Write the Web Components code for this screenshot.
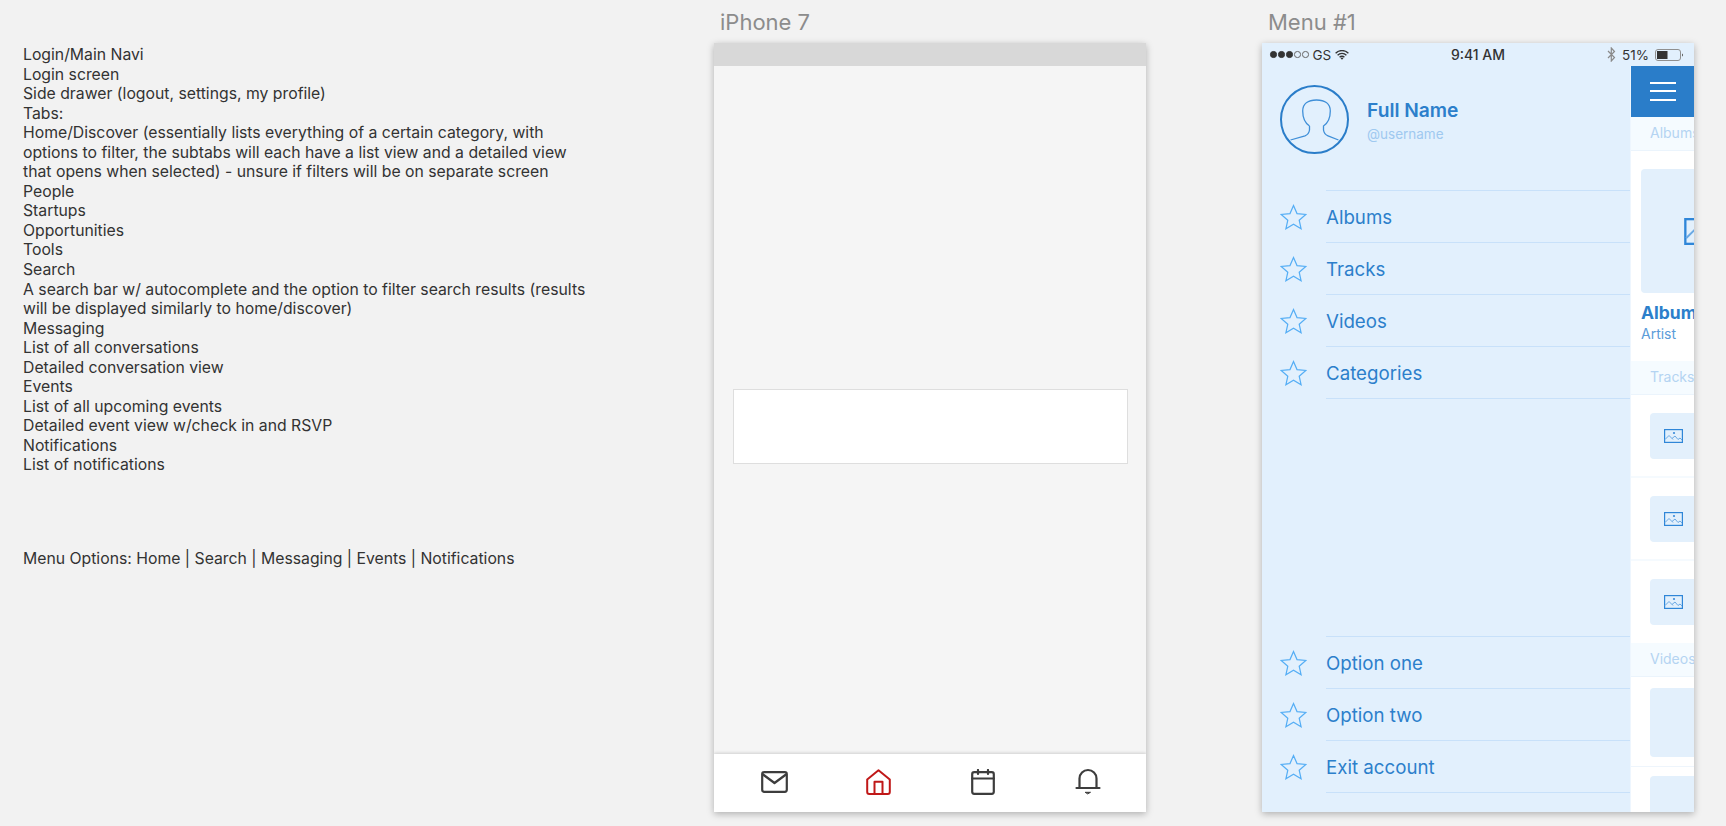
<!DOCTYPE html>
<html lang="en"><head><meta charset="utf-8"><title>Board</title>
<style>
html,body{margin:0;padding:0;height:826px;overflow:hidden;background:#f2f2f2;font-family:Inter,"Liberation Sans",sans-serif}
</style></head><body>
<app-page>
  <notes-panel></notes-panel>
  <art-board label="iPhone 7"><phone-screen></phone-screen></art-board>
  <art-board label="Menu #1"><menu-screen></menu-screen></art-board>
</app-page>
<script>
const def=(name,css,html)=>{customElements.define(name,class extends HTMLElement{
  connectedCallback(){ if(this.shadowRoot) return; const r=this.attachShadow({mode:'open'});
    r.innerHTML='<style>'+css+'</style>'+(typeof html==='function'?html(this):html); }
});};
const star='<svg width="27" height="26" viewBox="0 0 27 26"><path d="M13.5 1.5 17 9.6 25.8 10.4 19.2 16.2 21.1 24.8 13.5 20.3 5.9 24.8 7.8 16.2 1.2 10.4 10 9.6Z" fill="none" stroke="#55aef5" stroke-width="1.2" stroke-linejoin="miter"/></svg>';
const pic=(w,h)=>`<svg width="${w}" height="${h}" viewBox="0 0 19 14"><rect x=".6" y=".6" width="17.8" height="12.8" fill="none" stroke="#2f86d8" stroke-width="1.2"/><path d="M1 10.5 5 6.5 9 10.5M8 9.5 11 7 14 10.5 16 9 18 11" fill="none" stroke="#6aa9e4" stroke-width="1"/><circle cx="10" cy="4" r="1.1" fill="#3a8bd9"/></svg>`;

def('app-page',`:host{display:grid;grid-template-columns:714px 432px 432px;column-gap:0;height:826px;align-items:start}
::slotted(art-board:last-child){margin-left:116px}`,'<slot></slot>');

def('notes-panel',`:host{display:block;padding:45px 0 0 23px;font:15.77px/19.55px Inter,"Liberation Sans",sans-serif;color:#333;box-sizing:border-box}
.l{white-space:nowrap}.gap{margin-top:74px}`,
`<div class="l">Login/Main Navi</div><div class="l">Login screen</div><div class="l">Side drawer (logout, settings, my profile)</div><div class="l">Tabs:</div>
<div class="l">Home/Discover (essentially lists everything of a certain category, with</div><div class="l">options to filter, the subtabs will each have a list view and a detailed view</div><div class="l">that opens when selected) - unsure if filters will be on separate screen</div>
<div class="l">People</div><div class="l">Startups</div><div class="l">Opportunities</div><div class="l">Tools</div><div class="l">Search</div>
<div class="l">A search bar w/ autocomplete and the option to filter search results (results</div><div class="l">will be displayed similarly to home/discover)</div>
<div class="l">Messaging</div><div class="l">List of all conversations</div><div class="l">Detailed conversation view</div><div class="l">Events</div><div class="l">List of all upcoming events</div><div class="l">Detailed event view w/check in and RSVP</div><div class="l">Notifications</div><div class="l">List of notifications</div>
<div class="l gap">Menu Options: Home | Search | Messaging | Events | Notifications</div>`);

def('art-board',`:host{display:flex;flex-direction:column;width:432px}
.t{height:43px;box-sizing:border-box;padding:9px 0 0 6px;font:22px/26px Inter,"Liberation Sans",sans-serif;color:#8c8c8c;white-space:nowrap}
.f{height:769px;box-shadow:0 2px 7px rgba(0,0,0,.28);overflow:hidden;display:flex}`,
 el=>`<div class="t">${el.getAttribute('label')}</div><div class="f"><slot></slot></div>`);

def('phone-screen',`:host{display:flex;flex-direction:column;flex:1;background:#f5f5f5}
.s{height:23px;background:#d8d8d8}
.c{flex:1;padding:323px 18px 0 18.5px}
.b{height:73px;background:#fff;border:1px solid #dedede}`,
`<div class="s"></div><div class="c"><div class="b"></div></div><tab-bar></tab-bar>`);

def('tab-bar',`:host{display:grid;grid-template-columns:repeat(4,1fr);height:58px;padding:0 6px 0 8px;background:#fff;box-shadow:0 -1px 3px rgba(0,0,0,.16);align-items:center;justify-items:center;position:relative}
svg{display:block;fill:none;stroke:#3d3d3d;stroke-width:2.2;stroke-linejoin:round;stroke-linecap:round;margin-top:-3px}`,
`<svg width="27" height="22" viewBox="0 0 27 22"><rect x="1.2" y="1.2" width="24.6" height="19.6" rx="2"/><path d="M2 3.5 13.5 12 25 3.5"/></svg>
<svg width="25" height="26" viewBox="0 0 25 26" style="stroke:#c01818;stroke-width:2"><path d="M1.2 10.5 12.5 1.3 23.8 10.5V23a2 2 0 0 1-2 2H3.2a2 2 0 0 1-2-2Z"/><path d="M8.5 25V12.8H16.5V25"/></svg>
<svg width="24" height="26" viewBox="0 0 24 26"><rect x="1.2" y="3.2" width="21.6" height="21.6" rx="2"/><path d="M1.2 9.500H22.800M7 1V5M17 1V5"/></svg>
<svg width="26" height="27" viewBox="0 0 26 27"><path d="M1.500 20H24.500M4.500 20V10.500a8.500 8.500 0 0 1 17 0V20"/><path d="M10.500 24.300H15.500L13 25.700Z" fill="#3d3d3d" stroke-width="1"/></svg>`);

def('status-bar',`:host{display:flex;height:23px;box-sizing:border-box;align-items:center;padding:0 11px 0 8px;color:#333;position:relative;font:13.500px/22px Inter,"Liberation Sans",sans-serif}
.d{display:flex;gap:1.500px;margin-right:4px}.d i{width:6.500px;height:6.500px;border-radius:50%;background:#333;border:1px solid #333;box-sizing:border-box}.d i.o{background:none;border-color:#666}
.w{margin-left:4px}
.m{position:absolute;left:0;right:0;text-align:center;font-size:14px;font-weight:500}
.r{margin-left:auto;display:flex;align-items:center;gap:6px;font-size:13.500px}
.bt,.bat{display:block}`,
`<div class="d"><i></i><i></i><i></i><i class="o"></i><i class="o"></i></div><span>GS</span>
<svg class="w" width="14" height="10" viewBox="0 0 14 10"><path d="M.6 3.200a9 9 0 0 1 12.800 0M2.600 5.300a6.200 6.200 0 0 1 8.800 0M4.600 7.300a3.300 3.300 0 0 1 4.800 0" fill="none" stroke="#333" stroke-width="1.300"/><path d="M5.600 8.300 7 9.800 8.400 8.300a2 2 0 0 0-2.800 0Z" fill="#333"/></svg>
<div class="m">9:41 AM</div>
<div class="r"><svg class="bt" width="9" height="15" viewBox="0 0 9 15"><path d="M1 4 7.500 10.500 4.300 14V1L7.500 4.500 1 11" fill="none" stroke="#8a8a8a" stroke-width="1.200"/></svg><span>51%</span>
<svg class="bat" width="28" height="12" viewBox="0 0 28 12"><rect x=".5" y=".5" width="25" height="11" rx="2.500" fill="none" stroke="#8f8f8f"/><rect x="2" y="2" width="10.500" height="8" fill="#333"/><path d="M27 4.500v3L28 6.800V5.200Z" fill="#666"/></svg></div>`);

def('menu-row',`:host{display:flex;height:52px;padding-left:18px}
.i{width:27px;height:52px;margin-right:19px;display:flex;align-items:center;flex:none}
.i svg{display:block}
.x{flex:1;box-sizing:border-box;height:52px;border-bottom:1px solid #c8e1fa;padding-top:1px;font:18.700px/51px Inter,"Liberation Sans",sans-serif;color:#2c7fcb;white-space:nowrap}`,
`<div class="i">${star}</div><div class="x"><slot></slot></div>`);

def('profile-head',`:host{display:flex;height:124px;padding:19px 0 0 18px;box-sizing:border-box}
svg{display:block;flex:none}
.n{margin-left:18px;padding-top:12px}
.a{font:600 19.200px/26px Inter,"Liberation Sans",sans-serif;color:#2c7fcb;white-space:nowrap}
.u{font:13.500px/18px Inter,"Liberation Sans",sans-serif;color:#9fc9f0;margin-top:2px}`,
`<svg width="69" height="69" viewBox="0 0 69 69" fill="none"><circle cx="34.500" cy="34.500" r="33.500" stroke="#2a7dc9" stroke-width="2"/>
<path d="M29.500 41C25 38 22.700 32 22.700 26 22.700 19 28 15 36.500 15 45 15 50.300 19 50.300 26 50.300 32 48 38 43.500 41V45C44 48.500 46 50 48 50.800L58.500 55M29.500 41V45C29 48.500 27 50 25 50.800L10.500 55" stroke="#3f8fd8" stroke-width="1.300"/></svg>
<div class="n"><div class="a">Full Name</div><div class="u">@username</div></div>`);

def('section-strip',`:host{display:block;height:34px;box-sizing:border-box;background:#f5fbff;border-bottom:1px solid #ebf4fc;padding-left:19px;font:14px/32px Inter,"Liberation Sans",sans-serif;color:#b4d4f2;white-space:nowrap}`,'<slot></slot>');

def('thumb-row',`:host{display:block;box-sizing:border-box;padding:18px 0 0 19px;height:83px;border-bottom:2px solid #f5fafe}
.t{width:120px;height:46px;border-radius:4px;background:#e3f0fc;padding:16px 0 0 14px;box-sizing:border-box}
svg{display:block}`,`<div class="t">${pic(19,14)}</div>`);

def('video-thumb',`:host{display:block;box-sizing:border-box;padding:11px 0 0 19px;height:90px;border-bottom:1px solid #eef5fc}
.t{width:120px;height:69px;border-radius:4px;background:#e3f0fc}`,`<div class="t"></div>`);

def('peek-panel',`:host{display:block;width:63px;flex:none;overflow:hidden;background:#fff;box-shadow:-1px 0 0 #eef6fe;position:relative}
.h{height:51px;background:#2a7dc9;display:flex;flex-direction:column;gap:6.300px;padding:16px 0 0 19px;box-sizing:border-box}
.h i{display:block;width:26px;height:2px;background:#fff}
.hero{padding:18px 0 0 10px;height:210px;box-sizing:border-box}
.cover{width:200px;height:124px;background:#e3f0fc;border-radius:4px;box-sizing:border-box;padding:49px 0 0 43px}
.cover svg{display:block}
.a{font:700 17.500px/22px Inter,"Liberation Sans",sans-serif;color:#2c7fcb;margin-top:9px;white-space:nowrap}
.b{font:14px/18px Inter,"Liberation Sans",sans-serif;color:#5b9cd9;margin-top:1px}`,
`<div class="h"><i></i><i></i><i></i></div>
<section-strip>Albums</section-strip>
<div class="hero"><div class="cover">${pic(37,27)}</div><div class="a">Album name</div><div class="b">Artist</div></div>
<section-strip>Tracks</section-strip>
<thumb-row></thumb-row><thumb-row></thumb-row><thumb-row style="height:64px;border:0"></thumb-row>
<div style="height:18px"></div>
<section-strip>Videos</section-strip>
<video-thumb></video-thumb><video-thumb style="padding-top:9px"></video-thumb>`);

def('menu-screen',`:host{display:flex;flex-direction:column;flex:1;background:#e2f0fd;min-width:0}
.m{flex:1;display:flex;min-height:0}
.d{flex:1;display:flex;flex-direction:column;min-width:0}
.sp{flex:1}
.ln{height:1px;background:#c8e1fa;margin-left:64px}`,
`<status-bar></status-bar>
<div class="m"><div class="d"><profile-head></profile-head>
<div class="ln"></div><menu-row>Albums</menu-row><menu-row>Tracks</menu-row><menu-row>Videos</menu-row><menu-row>Categories</menu-row>
<div class="sp"></div>
<div class="ln"></div><menu-row>Option one</menu-row><menu-row>Option two</menu-row><menu-row>Exit account</menu-row><div style="height:19px"></div></div>
<peek-panel></peek-panel></div>`);
</script>
</body></html>
